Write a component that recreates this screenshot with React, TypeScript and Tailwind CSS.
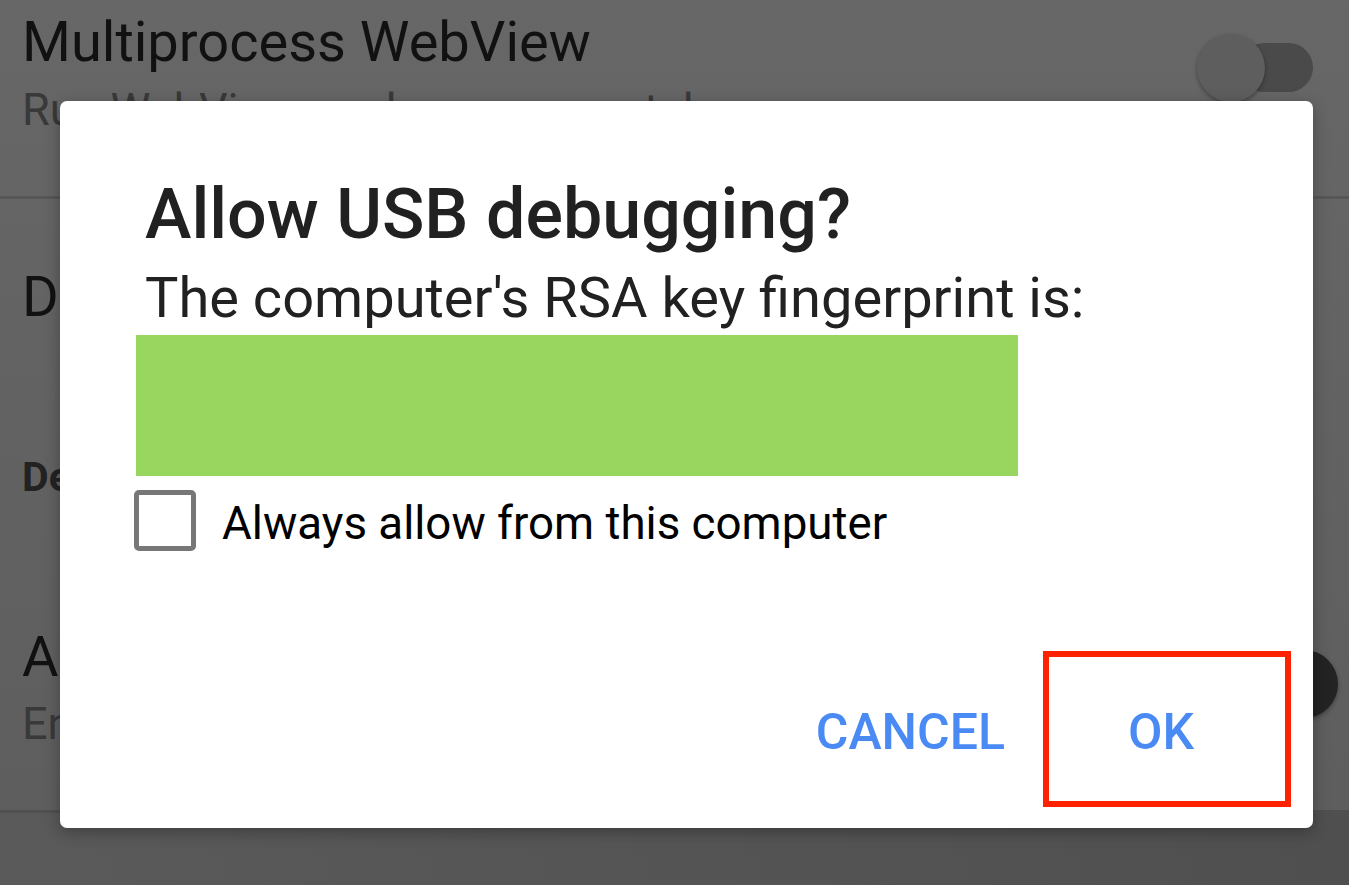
const font = "font-['Roboto','Noto_Sans',sans-serif]";

function Switch({ on, dark }: { on?: boolean; dark?: boolean }) {
  return (
    <div className="relative w-[116px] h-[68px] shrink-0">
      <div
        className={
          'absolute top-[9px] h-[49px] w-[73px] rounded-full bg-[#4a4a4a] ' + (on ? 'left-[8px]' : 'right-0')
        }
      />
      <div
        className={
          'absolute top-0 w-[68px] h-[68px] rounded-full shadow-[0_2px_4px_rgba(0,0,0,0.35)] ' +
          (on ? 'right-0 ' : 'left-0 ') +
          (dark ? 'bg-[#232323]' : 'bg-[#5e5e5e]')
        }
      />
    </div>
  );
}

function SettingsBehind() {
  return (
    <div className="flex flex-col w-full h-full bg-gradient-to-b from-[#676767] to-[#5d5d5d]">
      <div className="flex h-[196px] pl-[22px] pr-[36px]">
        <div className="flex-1 pt-[14px]">
          <div className="text-[56px] leading-[56px] text-[#111]">Multiprocess WebView</div>
          <div className="mt-[17px] text-[45px] leading-[46px] text-[#393939]">Run WebView renderers separately</div>
        </div>
        <div className="mt-[34px]">
          <Switch />
        </div>
      </div>
      <div className="h-[3px] bg-[#575757]" />
      <div className="pl-[22px] pt-[70px] text-[56px] leading-[56px] text-[#111]">Demo mode</div>
      <div className="pl-[22px] mt-[132px] text-[41px] leading-[41px] font-bold text-[#222]">Debugging</div>
      <div className="flex pl-[22px] pr-[11px] mt-[131px] h-[181px]">
        <div className="flex-1">
          <div className="text-[56px] leading-[56px] text-[#111]">Android debugging</div>
          <div className="mt-[16px] text-[45px] leading-[46px] text-[#393939]">Enable debug mode when USB is connected</div>
        </div>
        <div className="mt-[21px]">
          <Switch on dark />
        </div>
      </div>
      <div className="h-[3px] bg-[#505050]" />
      <div className="flex-1 bg-gradient-to-r from-[#5a5a5a] to-[#4f4f4f]" />
    </div>
  );
}

export default function App() {
  return (
    <div className={'relative w-[1349px] h-[885px] overflow-hidden ' + font}>
      <SettingsBehind />
      <div className="absolute left-[60px] top-[101px] w-[1253px] h-[727px] bg-white rounded-[7px] shadow-[0_4px_16px_rgba(0,0,0,0.3)] flex flex-col pl-[74px] pt-[78px] pr-[22px] pb-[21px]">
        <div className="ml-[11px] text-[70px] leading-[70px] font-medium text-[#212121] whitespace-nowrap">
          Allow USB debugging?
        </div>
        <div className="ml-[11px] mt-[21px] text-[56px] leading-[56px] text-[#212121] whitespace-nowrap">
          The computer's RSA key fingerprint is:
        </div>
        <div className="ml-[2px] mt-[9px] w-[882px] h-[141px] bg-[#99d660]" />
        <div className="flex items-start mt-[14px]">
          <div className="w-[62px] h-[61px] border-[5px] border-[#777] rounded-[5px]" />
          <div className="ml-[26px] mt-[11px] text-[45.7px] leading-[46px] text-[#000] whitespace-nowrap">
            Always allow from this computer
          </div>
        </div>
        <div className="mt-auto flex justify-end items-center">
          <button className="mr-[38px] pt-[6px] text-[50px] leading-[50px] font-medium text-[#4a8af4]">CANCEL</button>
          <button className="w-[248px] h-[156px] border-[6px] border-[#ff2200] flex items-center justify-center pt-[6px] pr-[12px] text-[50px] leading-[50px] font-medium text-[#4a8af4]">
            OK
          </button>
        </div>
      </div>
    </div>
  );
}
